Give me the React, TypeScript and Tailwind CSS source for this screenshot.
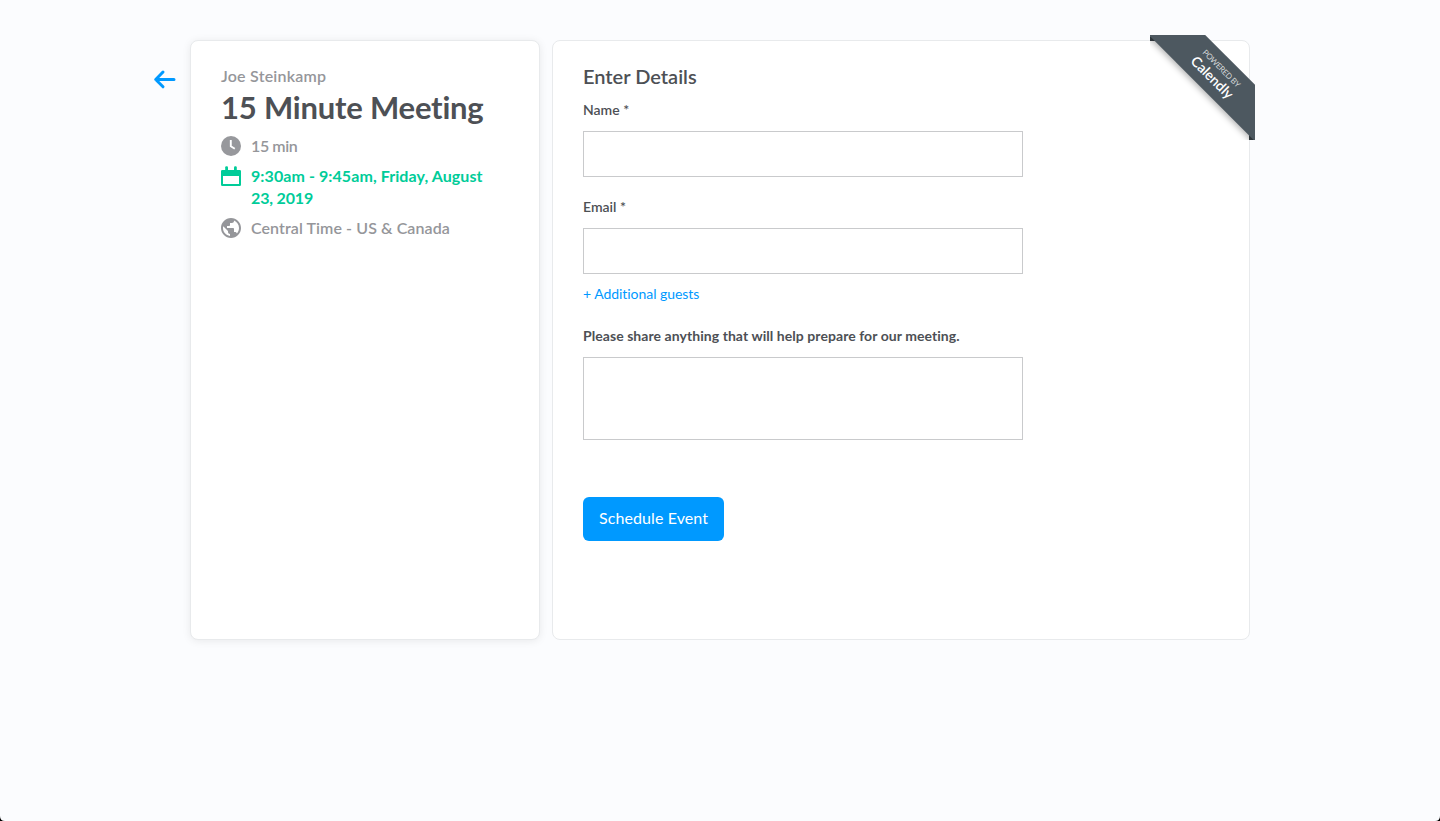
import type { ReactNode } from "react";
import { MdPublic } from "react-icons/md";

function BackArrow() {
  return (
    <svg width="24" height="20" viewBox="0 0 24 20" fill="none" stroke="#0099ff" strokeWidth="3" strokeLinecap="round" strokeLinejoin="round">
      <path d="M21 10.5H3M10 3 2.7 10.5 10 17.8" />
    </svg>
  );
}

function ClockIcon() {
  return (
    <svg width="20" height="20" viewBox="0 0 20 20">
      <circle cx="10" cy="10" r="10" fill="#97989c" />
      <path d="M9.8 4v6.3l4 2.5" fill="none" stroke="#fff" strokeWidth="1.9" />
    </svg>
  );
}

function CalendarIcon() {
  return (
    <svg width="20" height="20" viewBox="0 0 20 20" fill="#00cc99">
      <rect x="4.2" y="0.3" width="2.8" height="6" rx="1.2" />
      <rect x="13" y="0.3" width="2.8" height="6" rx="1.2" />
      <path fillRule="evenodd" d="M1.2 4h17.6A1.2 1.2 0 0 1 20 5.2v13.6a1.2 1.2 0 0 1-1.2 1.2H1.2A1.2 1.2 0 0 1 0 18.8V5.2a1.2 1.2 0 0 1 1.2-1.2ZM2 10v8h16v-8Z" />
    </svg>
  );
}

function Detail({ icon, children, className }: { icon: ReactNode; children: ReactNode; className: string }) {
  return (
    <div className={`flex gap-2.5 text-base leading-[22px] ${className}`}>
      <span className="mt-px h-5 w-5 shrink-0">{icon}</span>
      <span>{children}</span>
    </div>
  );
}

function Ribbon() {
  return (
    <div className="absolute -top-1.5 -right-1.5 h-[105px] w-[105px] overflow-hidden">
      <div className="absolute top-0 left-0 h-1.5 w-1.5 bg-[#3a4248]" />
      <div className="absolute right-0 bottom-0 h-1.5 w-1.5 bg-[#3a4248]" />
      <div className="absolute top-[18.7px] left-[-24px] flex h-[39.6px] w-[180px] rotate-45 flex-col items-center bg-[#4d5860] pt-[7px] whitespace-nowrap text-white shadow-[0_4px_6px_-2px_rgba(0,0,0,0.3)]">
        <span className="text-[8px] leading-[10px] tracking-[-0.25px] text-[#d5d8da]">POWERED BY</span>
        <span className="text-[14px] leading-[15px] font-semibold">Calendly</span>
      </div>
    </div>
  );
}

export default function App() {
  return (
    <div className="relative flex h-[821px] items-start overflow-hidden bg-[#fbfcfe] pt-10 pl-[153px] font-['Lato',sans-serif] [font-variant-ligatures:none]">
      <button className="mt-[29px] mr-[13px] w-6" aria-label="Back">
        <BackArrow />
      </button>
      <aside className="h-[600px] w-[350px] rounded-lg border border-[#e8eaec] bg-white px-[30px] pt-6 font-semibold text-[#95969a] shadow-[0_1px_8px_rgba(0,0,0,0.08)]">
        <p className="text-base leading-[22px] tracking-[0.22px]">Joe Steinkamp</p>
        <h1 className="mt-px text-[31px] leading-[38px] font-bold tracking-[-0.2px] whitespace-nowrap text-[#4d5055]">15 Minute Meeting</h1>
        <Detail className="mt-[9px] tracking-[-0.4px]" icon={<ClockIcon />}>15 min</Detail>
        <Detail className="mt-2 font-bold tracking-[0.08px] text-[#00cc99]" icon={<CalendarIcon />}>
          <span className="whitespace-nowrap">9:30am - 9:45am, Friday, August</span>
          <br />
          <span className="tracking-[-0.15px]">23, 2019</span>
        </Detail>
        <Detail className="mt-2 tracking-[0.08px]" icon={<MdPublic className="-m-0.5 h-6 w-6" />}>
          <span className="whitespace-nowrap">Central Time - US &amp; Canada</span>
        </Detail>
      </aside>
      <main className="relative ml-3 h-[600px] w-[698px] rounded-lg border border-[#e8eaec] bg-white px-[30px] pt-[23px] text-[#4d5055]">
        <h2 className="text-xl leading-6 font-semibold">Enter Details</h2>
        <form>
          <label className="mt-3 block text-sm leading-5 font-semibold">
            <span>Name *</span>
            <input className="mt-[11px] block h-[46px] w-[440px] border border-[#c9cacc]" />
          </label>
          <label className="mt-5 block text-sm leading-5 font-semibold">
            <span>Email *</span>
            <input className="mt-[11px] block h-[46px] w-[440px] border border-[#c9cacc]" />
          </label>
          <a className="mt-[10px] block w-fit text-sm leading-5 tracking-[-0.05px] text-[#0099ff]">+ Additional guests</a>
          <label className="mt-[22px] block text-sm leading-5 font-bold">
            <span className="tracking-[0.06px]">Please share anything that will help prepare for our meeting.</span>
            <textarea className="mt-[11px] block h-[83px] w-[440px] resize-none border border-[#c9cacc]" />
          </label>
          <button className="mt-[57px] h-11 w-[141px] rounded-md bg-[#0099ff] pb-0.5 text-base tracking-[0.1px] text-white">Schedule Event</button>
        </form>
        <Ribbon />
      </main>
      <svg className="absolute bottom-0 left-0" width="5" height="5" viewBox="0 0 5 5">
        <path d="M0 0Q0 5 5 5H0Z" />
      </svg>
      <svg className="absolute right-0 bottom-0" width="5" height="5" viewBox="0 0 5 5">
        <path d="M5 0Q5 5 0 5H5Z" />
      </svg>
    </div>
  );
}
